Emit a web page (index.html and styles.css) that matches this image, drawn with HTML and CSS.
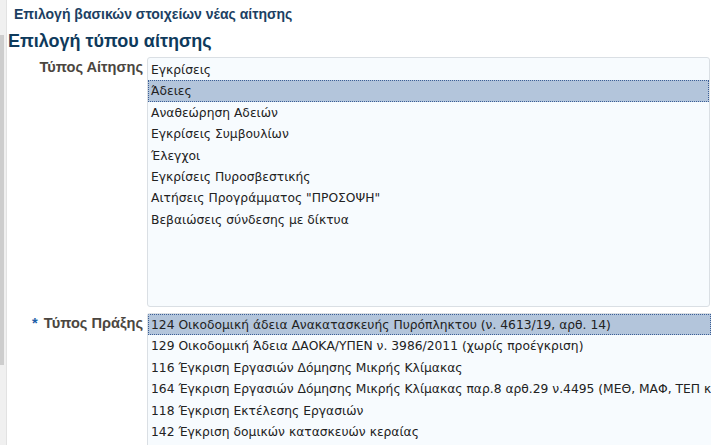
FILE: index.html
```html
<!DOCTYPE html>
<html lang="el">
<head>
<meta charset="utf-8">
<link rel="stylesheet" href="styles.css">
</head>
<body>
<div class="page">
  <div class="strip"><div class="thumb"></div></div>
  <div class="main">
    <div class="crumb">Επιλογή βασικών στοιχείων νέας αίτησης</div>
    <h1 class="title">Επιλογή τύπου αίτησης</h1>
    <div class="form">
      <div class="row row-top">
        <div class="label">Τύπος Αίτησης</div>
        <div class="list list-a">
          <div class="opt">Εγκρίσεις</div>
          <div class="opt sel">Άδειες</div>
          <div class="opt">Αναθεώρηση Αδειών</div>
          <div class="opt">Εγκρίσεις Συμβουλίων</div>
          <div class="opt">Έλεγχοι</div>
          <div class="opt">Εγκρίσεις Πυροσβεστικής</div>
          <div class="opt">Αιτήσεις Προγράμματος "ΠΡΟΣΟΨΗ"</div>
          <div class="opt">Βεβαιώσεις σύνδεσης με δίκτυα</div>
        </div>
      </div>
      <div class="row">
        <div class="label"><span class="req">*</span> Τύπος Πράξης</div>
        <div class="list list-b">
          <div class="opt sel">124 Οικοδομική άδεια Ανακατασκευής Πυρόπληκτου (ν. 4613/19, αρθ. 14)</div>
          <div class="opt">129 Οικοδομική Άδεια ΔΑΟΚΑ/ΥΠΕΝ ν. 3986/2011 (χωρίς προέγκριση)</div>
          <div class="opt">116 Έγκριση Εργασιών Δόμησης Μικρής Κλίμακας</div>
          <div class="opt">164 Έγκριση Εργασιών Δόμησης Μικρής Κλίμακας παρ.8 αρθ.29 ν.4495 (ΜΕΘ, ΜΑΦ, ΤΕΠ και ΑΤΜ)</div>
          <div class="opt">118 Έγκριση Εκτέλεσης Εργασιών</div>
          <div class="opt">142 Έγκριση δομικών κατασκευών κεραίας</div>
          <div class="opt">143 Έγκριση Εργασιών</div>
        </div>
      </div>
    </div>
  </div>
</div>
</body>
</html>
```
FILE: styles.css
```css
html, body {
  margin: 0;
  padding: 0;
  background: #ffffff;
  overflow: hidden;
}
.page {
  display: flex;
  height: 445px;
  width: 711px;
  overflow: hidden;
}
.strip {
  width: 6px;
  flex: 0 0 6px;
  background: #f0f0f0;
  border-right: 1px solid #e2e2e2;
  padding-top: 35px;
  box-sizing: content-box;
}
.thumb {
  width: 4px;
  height: 330px;
  background: #cdcdcd;
}
.main {
  flex: 1;
  min-width: 0;
  padding-left: 1px;
  font-family: "Liberation Sans", Arial, sans-serif;
}
.crumb {
  font-size: 14px;
  font-weight: bold;
  color: #1c3f63;
  padding: 5px 0 0 6px;
  line-height: 18px;
}
.title {
  margin: 0;
  font-size: 18px;
  font-weight: bold;
  color: #0e3a5c;
  line-height: 22px;
  padding-top: 7px;
}
.form {
  display: flex;
  flex-direction: column;
  gap: 6px;
  padding-top: 5px;
}
.row {
  display: grid;
  grid-template-columns: 135px 1fr;
  column-gap: 4px;
  align-items: start;
}
.label {
  text-align: right;
  font-size: 14.6px;
  font-weight: bold;
  color: #4b4640;
  line-height: 20px;
  white-space: nowrap;
}
.req {
  color: #1f5fa8;
  margin-right: 2px;
}
.list {
  background: #f7fbfe;
  border: 1px solid #dadfe4;
  border-radius: 3px;
  padding: 1px 0;
  font-family: "DejaVu Sans", Verdana, sans-serif;
  font-size: 12.3px;
  color: #222222;
  white-space: nowrap;
  overflow: hidden;
}
.list-a {
  height: 246px;
  margin-right: 1px;
}
.list-b {
  height: 140px;
  border-right: none;
  border-radius: 3px 0 0 0;
  padding-top: 0;
}
.opt {
  height: 21.4px;
  line-height: 20.5px;
  padding-left: 2px;
  box-sizing: border-box;
  border: 1px solid transparent;
}
.opt.sel {
  background: #b3c5db;
  border: 1px dotted #3c5f96;
}
```
